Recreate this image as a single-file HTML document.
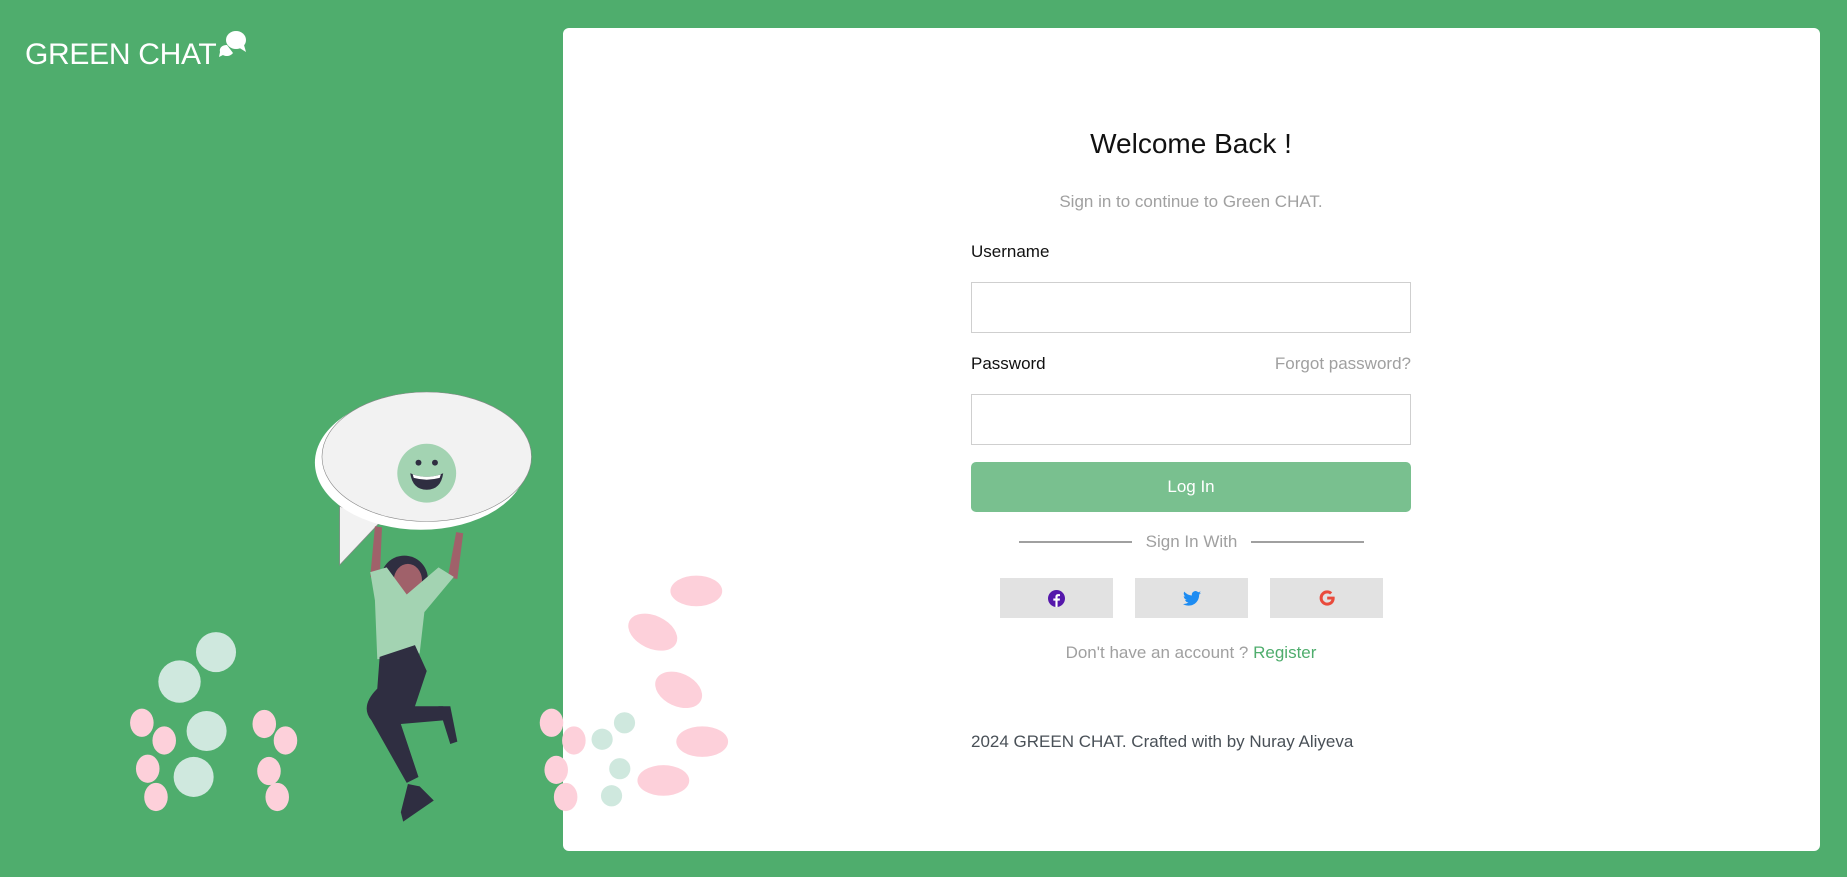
<!DOCTYPE html>
<html><head><meta charset="utf-8"><style>
*{box-sizing:border-box;margin:0;padding:0}
html,body{width:1847px;height:877px;overflow:hidden;background:#4fad6d;font-family:"Liberation Sans",sans-serif}
.logo{position:absolute;left:25px;top:38px;color:#fff;font-size:30px;letter-spacing:-0.3px}
.panel{position:absolute;left:563px;top:28px;width:1257px;height:823px;background:#fff;border-radius:6px}
.t{position:absolute;white-space:nowrap}
.c{left:971px;width:440px;text-align:center}
.in{position:absolute;left:971px;width:440px;height:51px;border:1px solid #cfcfcf;background:#fff}
.btn{position:absolute;left:971px;top:462px;width:440px;height:50px;background:#79c08f;border-radius:5px;color:#fff;font-size:17px;text-align:center;line-height:50px}
.soc{position:absolute;top:578px;width:113px;height:40px;background:#e2e2e2;display:flex;align-items:center;justify-content:center}
.line{position:absolute;top:541px;height:2px;background:#a0a0a0}
svg.ill{position:absolute;left:0;top:0}
</style></head><body>
<div class="panel"></div>
<div class="logo">GREEN CHAT</div>
<svg style="position:absolute;left:218px;top:30px" width="32" height="30" viewBox="0 0 32 30"><path d="M9 15c-5 0-8 3-7 7l-1 5 4-2c3 2 8 1 10-2" fill="#fff"/><ellipse cx="18" cy="10" rx="10" ry="9" fill="#fff"/><path d="M20 17l8 5-2-7z" fill="#fff"/></svg>

<div class="t c" style="top:128px;font-size:28px;color:#111">Welcome Back !</div>
<div class="t c" style="top:192px;font-size:17px;color:#a0a0a0">Sign in to continue to Green CHAT.</div>
<div class="t" style="left:971px;top:242px;font-size:17px;color:#111">Username</div>
<div class="in" style="top:282px"></div>
<div class="t" style="left:971px;top:354px;font-size:17px;color:#111">Password</div>
<div class="t" style="left:1270px;top:354px;width:141px;text-align:right;font-size:17px;color:#a0a0a0">Forgot password?</div>
<div class="in" style="top:394px"></div>
<div class="btn">Log In</div>
<div class="line" style="left:1019px;width:113px"></div>
<div class="line" style="left:1251px;width:113px"></div>
<div class="t" style="left:1132px;width:119px;text-align:center;top:532px;font-size:17px;color:#a0a0a0">Sign In With</div>
<div class="soc" style="left:1000px"><svg width="17" height="17" viewBox="0 0 16 16"><circle cx="8" cy="8" r="8" fill="#5517ab"/><path d="M9 16V10h2l.3-2H9V6.8c0-.6.3-1 1-1h1.3V4c-.4 0-1-.1-1.7-.1-1.8 0-2.6 1-2.6 2.7V8H5v2h2v6z" fill="#fff"/></svg></div>
<div class="soc" style="left:1135px"><svg width="18" height="15" viewBox="0 0 24 20"><path d="M24 2.4c-.9.4-1.8.6-2.8.8 1-.6 1.8-1.6 2.2-2.7-1 .6-2 1-3.1 1.2A4.9 4.9 0 0 0 11.9 6 14 14 0 0 1 1.7.9a4.9 4.9 0 0 0 1.5 6.6c-.8 0-1.6-.3-2.2-.6 0 2.4 1.7 4.4 3.9 4.8-.7.2-1.5.2-2.200.1.6 2 2.4 3.4 4.6 3.4A9.9 9.9 0 0 1 0 17.3 14 14 0 0 0 7.5 19.5c9.1 0 14-7.5 14-14v-.6c1-.7 1.8-1.6 2.5-2.5z" fill="#1d8cf2"/></svg></div>
<div class="soc" style="left:1270px"><svg width="16" height="16" viewBox="0 0 16 16"><path d="M15.5 6.6H8.2v2.9h4.2c-.4 2-2.1 3.1-4.2 3.1a4.6 4.6 0 0 1 0-9.2c1.1 0 2.1.4 2.9 1.1l2.1-2.1A7.6 7.6 0 0 0 8.2.4a7.6 7.6 0 1 0 0 15.2c4.4 0 7.5-3.1 7.5-7.600 0-.5 0-.9-.2-1.4z" fill="#e94b3c"/></svg></div>
<div class="t" style="left:1000px;width:382px;text-align:center;top:643px;font-size:17px;color:#a0a0a0">Don't have an account ? <span style="color:#4fad6d">Register</span></div>
<div class="t" style="left:971px;top:732px;font-size:17px;color:#495057">2024 GREEN CHAT. Crafted with by Nuray Aliyeva</div>

<svg class="ill" width="1847" height="877" viewBox="0 0 1568 745">
<g fill="#cfe8de">
<circle cx="183" cy="554" r="17"/><circle cx="152" cy="579" r="18"/><circle cx="175" cy="621" r="17"/><circle cx="164" cy="660" r="17"/>
<circle cx="530" cy="614" r="9"/><circle cx="511" cy="628" r="9"/><circle cx="526" cy="653" r="9"/><circle cx="519" cy="676" r="9"/>
</g>
<g fill="#fdd0da">
<ellipse cx="120" cy="614" rx="10" ry="12"/><ellipse cx="139" cy="629" rx="10" ry="12"/><ellipse cx="125" cy="653" rx="10" ry="12"/><ellipse cx="132" cy="677" rx="10" ry="12"/>
<ellipse cx="224" cy="615" rx="10" ry="12"/><ellipse cx="242" cy="629" rx="10" ry="12"/><ellipse cx="228" cy="655" rx="10" ry="12"/><ellipse cx="235" cy="677" rx="10" ry="12"/>
<ellipse cx="468" cy="614" rx="10" ry="12"/><ellipse cx="487" cy="629" rx="10" ry="12"/><ellipse cx="472" cy="654" rx="10" ry="12"/><ellipse cx="480" cy="677" rx="10" ry="12"/>
<ellipse cx="591" cy="502" rx="22" ry="13"/><ellipse cx="554" cy="537" rx="22" ry="14" transform="rotate(25 554 537)"/><ellipse cx="576" cy="586" rx="21" ry="14" transform="rotate(25 576 586)"/><ellipse cx="596" cy="630" rx="22" ry="13"/><ellipse cx="563" cy="663" rx="22" ry="13"/>
</g>
<path d="M288 430 L288 480 L322 444 Z" fill="#f2f2f2" stroke="#888" stroke-width=".6"/>
<ellipse cx="357" cy="393" rx="90" ry="57" fill="#fff"/>
<ellipse cx="362" cy="388" rx="89" ry="55" fill="#f2f2f2" stroke="#888" stroke-width=".5"/>
<ellipse cx="362" cy="402" rx="25" ry="25" fill="#a3d3b2"/>
<circle cx="355" cy="393" r="2.5" fill="#2f2e41"/><circle cx="369" cy="393" r="2.5" fill="#2f2e41"/>
<path d="M348 402 Q362 408 376 402 Q374 416 362 416 Q350 416 348 402Z" fill="#2f2e41"/><path d="M350 403 Q362 407 374 403 L373 406 Q362 409 351 406Z" fill="#fff"/>
<path d="M318 447 L314 490 L322 492 L324 448Z M387 452 L380 490 L388 492 L393 453Z" fill="#a0616a"/>
<circle cx="343" cy="492" r="20" fill="#2f2e41"/><ellipse cx="346" cy="493" rx="12" ry="14" fill="#a0616a"/>
<path d="M314 486 L328 482 L345 505 L372 482 L385 490 L360 520 L356 555 L320 560 L318 510Z" fill="#a3d3b2"/>
<path d="M322 558 L352 548 L362 570 L352 600 L376 600 L376 612 L340 615 L355 660 L345 665 L315 612 Q305 600 320 585Z" fill="#2f2e41"/>
<path d="M372 600 L382 600 L388 630 L382 632Z" fill="#2f2e41"/>
<path d="M346 666 L356 668 L368 680 L342 698 L340 690Z" fill="#2f2e41"/>
</svg>
</body></html>
